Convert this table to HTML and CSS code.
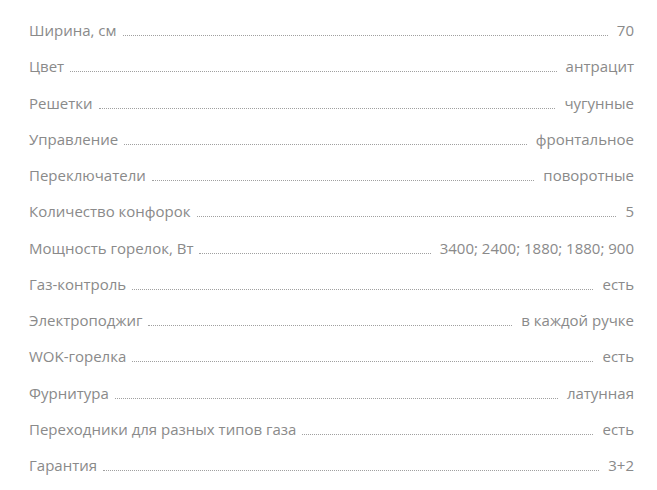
FILE: index.html
```html
<!DOCTYPE html>
<html lang="ru">
<head>
<meta charset="utf-8">
<link rel="stylesheet" href="styles.css">
</head>
<body>
<div class="specs">
  <div class="row"><span class="label">Ширина, см</span><span class="dots"></span><span class="value">70</span></div>
  <div class="row"><span class="label">Цвет</span><span class="dots"></span><span class="value">антрацит</span></div>
  <div class="row"><span class="label">Решетки</span><span class="dots"></span><span class="value">чугунные</span></div>
  <div class="row"><span class="label">Управление</span><span class="dots"></span><span class="value">фронтальное</span></div>
  <div class="row"><span class="label">Переключатели</span><span class="dots"></span><span class="value">поворотные</span></div>
  <div class="row"><span class="label">Количество конфорок</span><span class="dots"></span><span class="value">5</span></div>
  <div class="row"><span class="label">Мощность горелок, Вт</span><span class="dots"></span><span class="value">3400; 2400; 1880; 1880; 900</span></div>
  <div class="row"><span class="label">Газ-контроль</span><span class="dots"></span><span class="value">есть</span></div>
  <div class="row"><span class="label">Электроподжиг</span><span class="dots"></span><span class="value">в каждой ручке</span></div>
  <div class="row"><span class="label">WOK-горелка</span><span class="dots"></span><span class="value">есть</span></div>
  <div class="row"><span class="label">Фурнитура</span><span class="dots"></span><span class="value">латунная</span></div>
  <div class="row"><span class="label">Переходники для разных типов газа</span><span class="dots"></span><span class="value">есть</span></div>
  <div class="row"><span class="label">Гарантия</span><span class="dots"></span><span class="value">3+2</span></div>
</div>
</body>
</html>
```
FILE: styles.css
```css
html, body {
  margin: 0;
  padding: 0;
  background: #fff;
}
.specs {
  width: 605px;
  padding: 12px 0 0 29px;
  font-family: "Open Sans", "Liberation Sans", sans-serif;
  font-size: 15px;
  color: #8a8a8a;
}
.row {
  display: flex;
  align-items: baseline;
  height: 36.25px;
  line-height: 36px;
}
.label {
  white-space: nowrap;
}
.dots {
  flex: 1;
  margin: 0 9px 0 6px;
  border-bottom: 1px dotted #a0a0a0;
  height: 0;
}
.value {
  white-space: nowrap;
}
```
